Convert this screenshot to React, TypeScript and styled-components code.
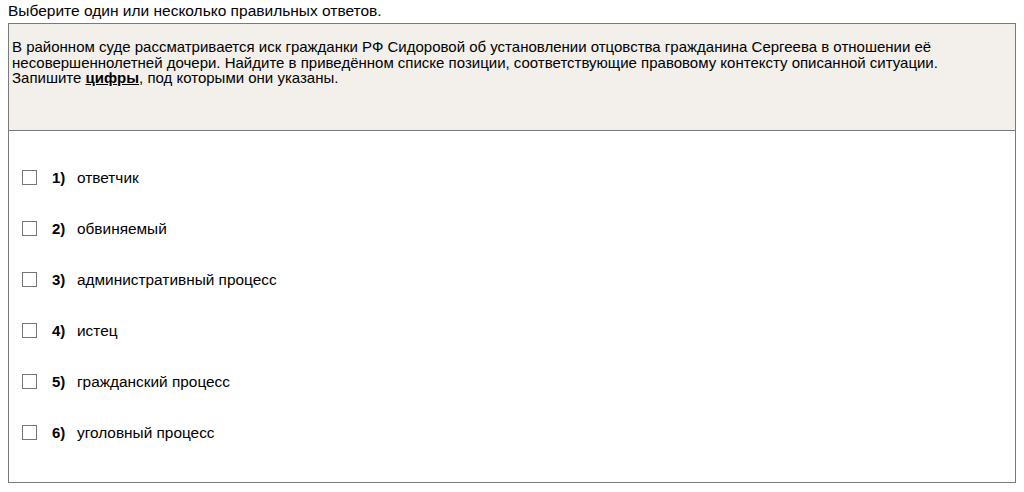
import React from "react";
import styled, { createGlobalStyle } from "styled-components";

const Global = createGlobalStyle`
  html, body { margin: 0; padding: 0; background: #fff; }
  body { font-family: "Liberation Sans", Arial, sans-serif; color: #000; }
`;

const Page = styled.div`
  padding: 3px 9px 0 8px;
  font-size: 15px;
  line-height: 15.5px;
`;

const Prompt = styled.div`
  height: 20px;
  font-size: 15.5px;
`;

const Card = styled.div`
  border: 1px solid #7a7a7a;
  width: 1006px;
`;

const Question = styled.div`
  background: #f3f0eb;
  border-bottom: 1px solid #7a7a7a;
  height: 91px;
  padding: 15px 3px 0 3px;
`;

const Strong = styled.b`
  text-decoration: underline;
`;

const Options = styled.div`
  display: flex;
  flex-direction: column;
  padding: 21px 0 24px 13px;
  font-size: 15.4px;
`;

const Row = styled.label`
  display: flex;
  align-items: center;
  height: 51px;
`;

const Box = styled.span`
  width: 13px;
  height: 13px;
  border: 1px solid #767676;
  background: #fff;
  flex: none;
`;

const Num = styled.b`
  margin-left: 15px;
  width: 25px;
  font-size: 15px;
`;

const items = [
  "ответчик",
  "обвиняемый",
  "административный процесс",
  "истец",
  "гражданский процесс",
  "уголовный процесс",
];

export default function App() {
  return (
    <>
      <Global />
      <Page>
        <Prompt>Выберите один или несколько правильных ответов.</Prompt>
        <Card>
          <Question>
            В районном суде рассматривается иск гражданки РФ Сидоровой об установлении отцовства гражданина Сергеева в отношении её
            <br />
            несовершеннолетней дочери. Найдите в приведённом списке позиции, соответствующие правовому контексту описанной ситуации.
            <br />
            Запишите <Strong>цифры</Strong>, под которыми они указаны.
          </Question>
          <Options>
            {items.map((t, i) => (
              <Row key={i}>
                <Box />
                <Num>{i + 1})</Num>
                <span>{t}</span>
              </Row>
            ))}
          </Options>
        </Card>
      </Page>
    </>
  );
}
